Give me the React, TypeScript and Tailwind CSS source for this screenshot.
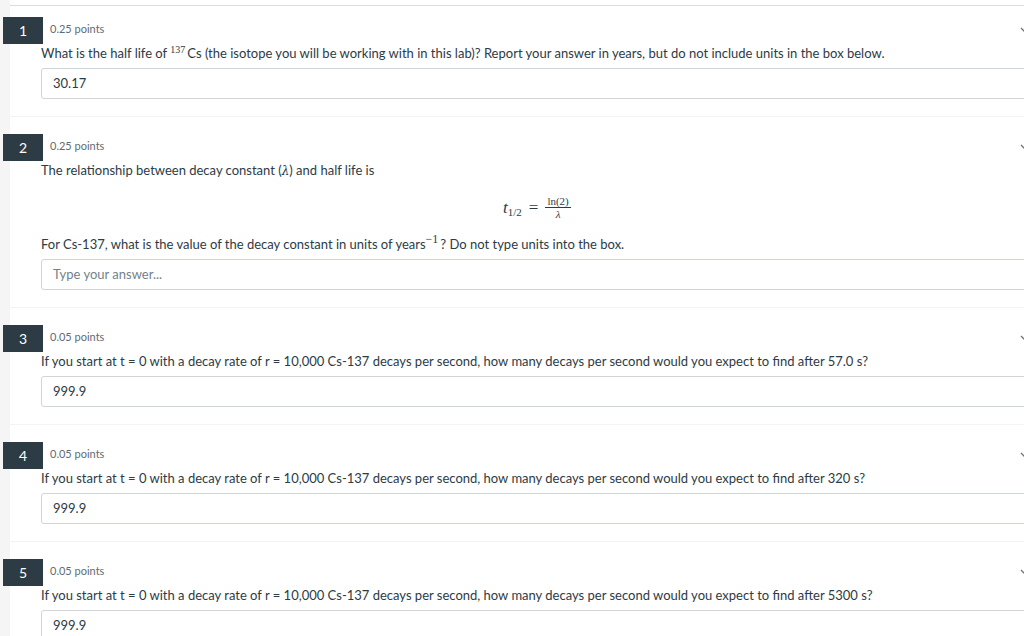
import React from "react";

const textColor = "text-[#2d3b45]";

function Chevron() {
  return (
    <svg
      className="absolute left-[1019px] top-[-5px]"
      width="12"
      height="12"
      viewBox="0 0 12 12"
      fill="none"
      stroke="#6b7780"
      strokeWidth="1.3"
    >
      <path d="M2 4 L6 8 L10 4" />
    </svg>
  );
}

function Header({ n, points }: { n: number; points: string }) {
  return (
    <div className="relative flex items-center h-[27px]">
      <div className="-ml-[38px] w-[40px] h-[27px] bg-[#2d3b45] text-white text-[14px] flex items-center justify-center">
        {n}
      </div>
      <div className="ml-[7px] text-[11px] text-[#5f6b73] relative top-[-1px]">{points}</div>
      <div className="absolute left-[-41px] top-[12px] w-0 h-0">
        <Chevron />
      </div>
    </div>
  );
}

function Answer({ value, placeholder }: { value?: string; placeholder?: string }) {
  return (
    <div className="h-[31px] border border-[#d0d5d9] rounded-[3px] flex items-center pl-[11px] text-[13px]">
      {value ? (
        <span className={textColor}>{value}</span>
      ) : (
        <span className="text-[#73818c]">{placeholder}</span>
      )}
    </div>
  );
}

function Question({
  n,
  points,
  children,
  value,
  placeholder,
  first,
}: {
  n: number;
  points: string;
  children: React.ReactNode;
  value?: string;
  placeholder?: string;
  first?: boolean;
}) {
  return (
    <div
      className={
        (first ? "pt-[11px] " : "pt-[17px] border-t border-[#f3f3f3] ") +
        "pl-[31px] pb-[17px]"
      }
    >
      <Header n={n} points={points} />
      {children}
      <div className="mt-[6px]">
        <Answer value={value} placeholder={placeholder} />
      </div>
    </div>
  );
}

const q = `If you start at t = 0 with a decay rate of r = 10,000 Cs-137 decays per second, how many decays per second would you expect to find after `;

export default function App() {
  return (
    <div
      className={`w-[1024px] h-[636px] overflow-hidden bg-white flex ${textColor}`}
      style={{ fontFamily: "Lato, 'Open Sans', sans-serif" }}
    >
      <div className="w-[10px] shrink-0 bg-[#f5f5f5]" />
      <div className="w-[1060px] shrink-0">
        <div className="mt-[5px] border-t border-[#dcdcdc]">
          <Question n={1} points="0.25 points" value="30.17" first>
            <div className="text-[13px] leading-[18px] h-[18px]">
              What is the half life of{" "}
              <span
                className="text-[10px] leading-none inline-block align-top relative top-[1px] mr-[2px]"
                style={{ fontFamily: "'Liberation Serif', 'DejaVu Serif', serif" }}
              >
                137
              </span>
              Cs (the isotope you will be working with in this lab)? Report your answer in years, but do not include units in the box below.
            </div>
          </Question>
          <Question n={2} points="0.25 points" placeholder="Type your answer...">
            <div className="text-[13px] leading-[18px] h-[18px]">
              The relationship between decay constant (
              <span style={{ fontFamily: "'DejaVu Serif', serif" }} className="italic text-[12px]">λ</span>
              ) and half life is
            </div>
            <div className="h-[56px] flex items-center pl-[462px]">
              <div
                className="flex items-center text-[#2d3b45]"
                style={{ fontFamily: "'Liberation Serif', 'DejaVu Serif', serif" }}
              >
                <span className="italic text-[17px] leading-none">t</span>
                <span className="text-[11px] leading-none relative top-[5px]">1/2</span>
                <span className="text-[17px] leading-none mx-[7px]">=</span>
                <span className="inline-flex flex-col items-center text-[11px] leading-[12px]">
                  <span className="px-[2px] border-b border-[#2d3b45]">ln(2)</span>
                  <span className="italic">λ</span>
                </span>
              </div>
            </div>
            <div className="text-[13px] leading-[18px] h-[18px]">
              For Cs-137, what is the value of the decay constant in units of years
              <span
                className="text-[12px] leading-none inline-block align-top relative top-[-2px] mr-[2px]"
                style={{ fontFamily: "'Liberation Serif', serif" }}
              >
                −1
              </span>
              ? Do not type units into the box.
            </div>
          </Question>
          <Question n={3} points="0.05 points" value="999.9">
            <div className="text-[13px] leading-[18px]">{q}57.0 s?</div>
          </Question>
          <Question n={4} points="0.05 points" value="999.9">
            <div className="text-[13px] leading-[18px]">{q}320 s?</div>
          </Question>
          <Question n={5} points="0.05 points" value="999.9">
            <div className="text-[13px] leading-[18px]">{q}5300 s?</div>
          </Question>
        </div>
      </div>
    </div>
  );
}
